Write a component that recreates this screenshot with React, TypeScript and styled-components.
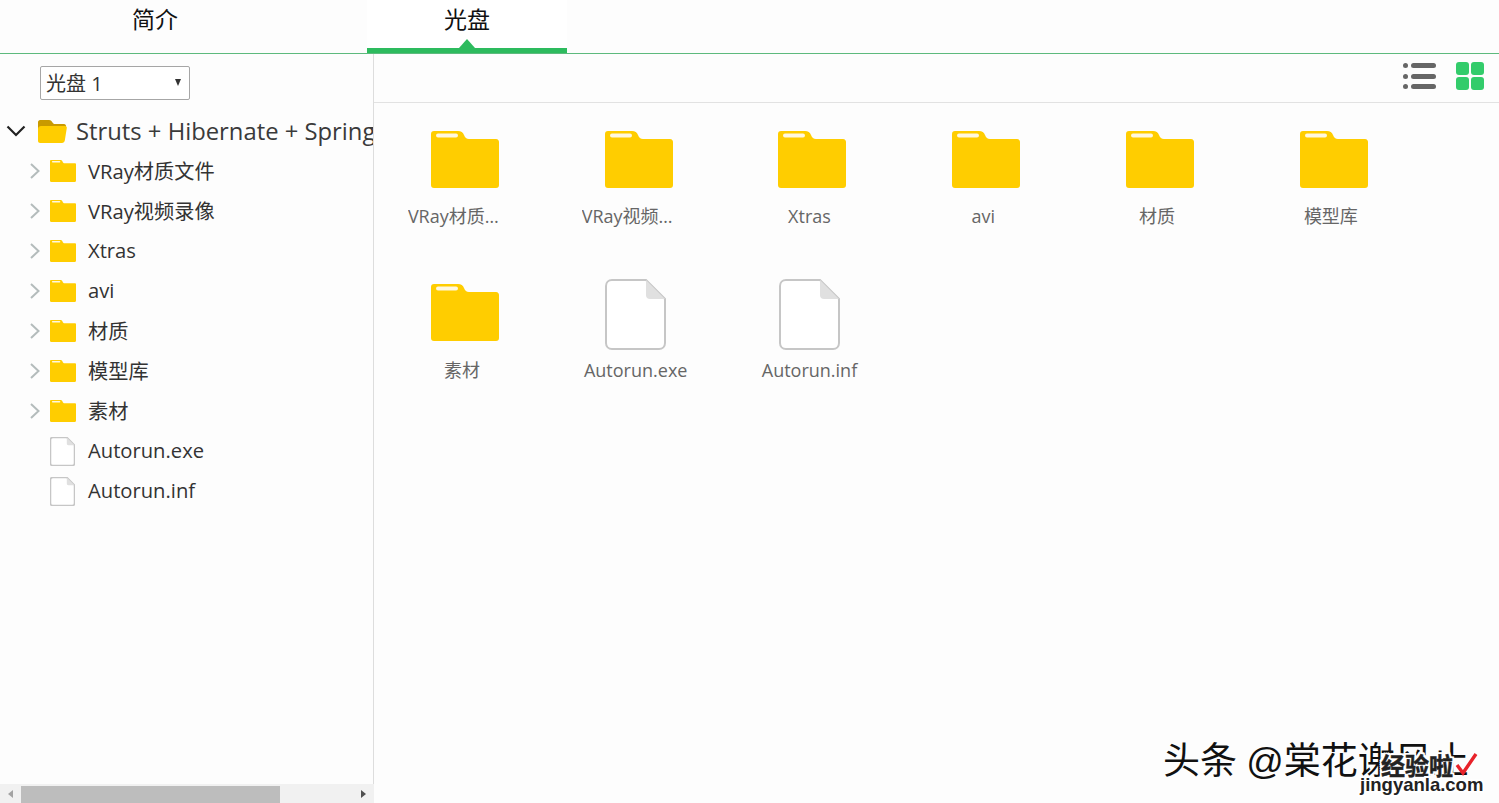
import React from "react";
import styled, { createGlobalStyle } from "styled-components";

const fontStack = `"Open Sans", "Noto Sans CJK SC", sans-serif`;

const Global = createGlobalStyle`
  html, body { margin: 0; padding: 0; height: 100%; background: #fdfdfd; overflow: hidden; }
  #root { height: 100%; }
  * { box-sizing: border-box; }
`;

const Page = styled.div`
  position: relative;
  width: 1499px;
  height: 803px;
  overflow: hidden;
  display: flex;
  flex-direction: column;
  font-family: ${fontStack};
  color: #333;
  background: #fdfdfd;
`;

const TabBar = styled.div`
  flex: none;
  height: 54px;
  display: flex;
  gap: 112px;
  padding-left: 55px;
  border-bottom: 1px solid #5dba7d;
`;

const Tab = styled.div<{ $active?: boolean }>`
  position: relative;
  width: 200px;
  height: 53px;
  padding-top: 2px;
  text-align: center;
  font-size: 23px;
  line-height: 35px;
  color: #111;
  background: ${(p) => (p.$active ? "#fff" : "transparent")};
  border-bottom: ${(p) => (p.$active ? "5px solid #2dbb5e" : "none")};
  ${(p) =>
    p.$active
      ? `&::after {
    content: "";
    position: absolute;
    left: 92px;
    bottom: 0;
    border-left: 8px solid transparent;
    border-right: 8px solid transparent;
    border-bottom: 9px solid #2dbb5e;
  }`
      : ""}
`;

const Body = styled.div`
  flex: 1;
  min-height: 0;
  display: flex;
`;

const Sidebar = styled.aside`
  flex: none;
  width: 374px;
  display: flex;
  flex-direction: column;
  border-right: 1px solid #ddd;
`;

const SelectRow = styled.div`
  flex: none;
  height: 57px;
  padding: 12px 0 0 40px;
`;

const SelectBox = styled.div`
  position: relative;
  width: 150px;
  height: 34px;
  &::after {
    content: "";
    position: absolute;
    right: 9px;
    top: 13px;
    border-left: 3.5px solid transparent;
    border-right: 3.5px solid transparent;
    border-top: 7px solid #333;
    pointer-events: none;
  }
`;

const DiscSelect = styled.select`
  width: 100%;
  height: 100%;
  appearance: none;
  padding: 0 0 0 5px;
  font-family: ${fontStack};
  font-size: 20px;
  color: #333;
  background: #fff;
  border: 1px solid #a6a6a6;
  border-radius: 2px;
`;

const Tree = styled.div`
  flex: 1;
  min-height: 0;
  overflow: hidden;
`;

const RootRow = styled.div`
  height: 40px;
  display: flex;
  align-items: center;
  padding-left: 6px;
  font-size: 23.8px;
  white-space: nowrap;
  color: #3a3a3a;
`;

const TreeRow = styled.div`
  height: 40px;
  display: flex;
  align-items: center;
  padding-left: 29px;
  font-size: 20.2px;
  white-space: nowrap;
  color: #333;
`;

const RowText = styled.span`
  display: block;
  margin-top: -2px;
`;

const RootText = styled.span`
  display: block;
`;

const Arrow = styled.span`
  flex: none;
  width: 21px;
  height: 20px;
  display: flex;
  align-items: center;
`;

const RootArrow = styled.span`
  flex: none;
  width: 32px;
  height: 20px;
  display: flex;
  align-items: center;
`;

const TreeIcon = styled.span`
  flex: none;
  width: 38px;
  display: flex;
  align-items: center;
`;

const RootIcon = styled.span`
  flex: none;
  width: 38px;
  display: flex;
  align-items: center;
`;

const ScrollTrack = styled.div`
  flex: none;
  height: 19px;
  display: flex;
  align-items: stretch;
  background: #f1f1f1;
  margin-right: -1px;
`;

const ScrollButton = styled.span`
  flex: none;
  width: 21px;
  display: flex;
  align-items: center;
  justify-content: center;
`;

const ScrollThumb = styled.span`
  flex: none;
  width: 259px;
  margin-top: 2px;
  background: #bdbdbd;
`;

const ScrollRest = styled.span`
  flex: 1;
`;

const LeftTri = styled.span`
  border-top: 4px solid transparent;
  border-bottom: 4px solid transparent;
  border-right: 5px solid #a3a3a3;
`;

const RightTri = styled.span`
  border-top: 4px solid transparent;
  border-bottom: 4px solid transparent;
  border-left: 5px solid #505050;
`;

const Main = styled.main`
  flex: 1;
  min-width: 0;
  display: flex;
  flex-direction: column;
`;

const Toolbar = styled.div`
  flex: none;
  height: 49px;
  display: flex;
  justify-content: flex-end;
  align-items: flex-start;
  gap: 20px;
  padding: 8px 15px 0 0;
  border-bottom: 1px solid #e2e2e2;
`;

const ListIcon = styled.div`
  width: 33px;
  height: 28px;
  display: flex;
  flex-direction: column;
  justify-content: space-between;
  padding: 1px 0;
`;

const ListLine = styled.div`
  height: 5px;
  display: flex;
  gap: 3px;
  &::before {
    content: "";
    width: 5px;
    border-radius: 50%;
    background: #666;
  }
  &::after {
    content: "";
    flex: 1;
    border-radius: 3px;
    background: #666;
  }
`;

const GridIcon = styled.div`
  width: 28px;
  height: 28px;
  display: grid;
  grid-template-columns: 13px 13px;
  grid-template-rows: 13px 13px;
  gap: 2px;
`;

const GridCell = styled.span`
  border-radius: 3px;
  background: #33cc6b;
`;

const FileGrid = styled.div`
  display: grid;
  grid-template-columns: repeat(6, 173.8px);
  grid-auto-rows: 153.5px;
  padding: 20.6px 0 0 1px;
`;

const Item = styled.div`
  display: flex;
  flex-direction: column;
  align-items: center;
`;

const ItemIcon = styled.div<{ $file?: boolean }>`
  height: 74px;
  margin-left: ${(p) => (p.$file ? "0" : "6px")};
  padding-top: ${(p) => (p.$file ? "2px" : "7px")};
`;

const ItemLabel = styled.div`
  width: 108px;
  margin-top: 5.9px;
  font-size: 18px;
  line-height: 26px;
  color: #666;
  text-align: center;
  white-space: nowrap;
  overflow: hidden;
  text-overflow: ellipsis;
`;

const Watermark = styled.div`
  position: absolute;
  left: 1163px;
  top: 735px;
  font-family: "Noto Sans CJK SC", sans-serif;
  font-size: 37px;
  line-height: 46px;
  word-spacing: 1px;
  color: #111;
  white-space: nowrap;
`;

const WatermarkAt = styled.span`
  font-family: "Liberation Sans", sans-serif;
`;

const StampCn = styled.div`
  position: absolute;
  left: 1381px;
  top: 750px;
  font-family: "Noto Sans CJK SC", sans-serif;
  font-weight: 700;
  font-size: 24px;
  line-height: 30px;
  color: #222;
  -webkit-text-stroke: 0.5px #222;
  text-shadow: 2px 0 #fff, -2px 0 #fff, 0 2px #fff, 0 -2px #fff, 2px 2px #fff, -2px -2px #fff, 2px -2px #fff, -2px 2px #fff;
  white-space: nowrap;
`;

const StampEn = styled.div`
  position: absolute;
  left: 1360px;
  top: 773px;
  font-family: "Liberation Sans", sans-serif;
  font-weight: 700;
  font-size: 18.5px;
  line-height: 24px;
  color: #222;
  text-shadow: 2px 0 #fff, -2px 0 #fff, 0 2px #fff, 0 -2px #fff, 2px 2px #fff, -2px -2px #fff, 2px -2px #fff, -2px 2px #fff;
  white-space: nowrap;
`;

const StampCheck = styled.svg`
  position: absolute;
  left: 1455px;
  top: 752px;
`;

const FolderGlyph = ({ w, h }: { w: number; h: number }) => (
  <svg width={w} height={h} viewBox="0 0 68 57" style={{ display: "block" }}>
    <path
      d="M3 0H27C30 0 32 1.5 33 4C34 6.5 35.5 8 38 8H65C67 8 68 9.5 68 11V54C68 56 67 57 65 57H3C1 57 0 56 0 54V3C0 1 1 0 3 0Z"
      fill="#ffcd00"
    />
    <rect x="5" y="2.5" width="22" height="4" rx="2" fill="#fff8e0" />
  </svg>
);

const OpenFolderGlyph = () => (
  <svg width="29" height="23" viewBox="0 0 29 23" style={{ display: "block" }}>
    <path d="M2 0H11C13 0 13.5 1 14.5 2.5C15 3.3 15.5 4 17 4H26C27.5 4 28 5 28 6V12H0V2C0 1 1 0 2 0Z" fill="#c99a00" />
    <path d="M3 6H27C28.5 6 29 7 28.8 8L26.8 20.5C26.5 22 25.5 23 24 23H2C1 23 0 22 0 21V9C0 7 1.5 6 3 6Z" fill="#ffcd00" />
  </svg>
);

const FileGlyph = ({ w, h, sw }: { w: number; h: number; sw: number }) => (
  <svg width={w} height={h} viewBox="0 0 61 71" style={{ display: "block" }}>
    <path
      d="M7 1H41L60 20V64C60 67.5 57.5 70 54 70H7C3.5 70 1 67.5 1 64V7C1 3.5 3.5 1 7 1Z"
      fill="#fff"
      stroke="#c6c6c6"
      strokeWidth={sw}
    />
    <path d="M41 1L60 20H45C42.5 20 41 18.5 41 16V1Z" fill="#e0e0e0" />
  </svg>
);

const ChevronRight = () => (
  <svg width="12" height="18" viewBox="0 0 12 18" style={{ display: "block" }}>
    <path d="M2 2L9.5 9L2 16" fill="none" stroke="#b4bcbc" strokeWidth="2" />
  </svg>
);

const ChevronDown = () => (
  <svg width="20" height="12" viewBox="0 0 20 12" style={{ display: "block" }}>
    <path d="M1.5 1.5L10 10L18.5 1.5" fill="none" stroke="#222" strokeWidth="2.2" />
  </svg>
);

type Entry = { name: string; kind: "folder" | "file" };

const entries: Entry[] = [
  { name: "VRay材质文件", kind: "folder" },
  { name: "VRay视频录像", kind: "folder" },
  { name: "Xtras", kind: "folder" },
  { name: "avi", kind: "folder" },
  { name: "材质", kind: "folder" },
  { name: "模型库", kind: "folder" },
  { name: "素材", kind: "folder" },
  { name: "Autorun.exe", kind: "file" },
  { name: "Autorun.inf", kind: "file" },
];

export default function App() {
  return (
    <Page>
      <Global />
      <TabBar>
        <Tab>简介</Tab>
        <Tab $active>光盘</Tab>
      </TabBar>
      <Body>
        <Sidebar>
          <SelectRow>
            <SelectBox>
              <DiscSelect defaultValue="1">
                <option value="1">光盘 1</option>
              </DiscSelect>
            </SelectBox>
          </SelectRow>
          <Tree>
            <RootRow>
              <RootArrow>
                <ChevronDown />
              </RootArrow>
              <RootIcon>
                <OpenFolderGlyph />
              </RootIcon>
              <RootText>Struts + Hibernate + Spring</RootText>
            </RootRow>
            {entries.map((e) => (
              <TreeRow key={e.name}>
                <Arrow>{e.kind === "folder" ? <ChevronRight /> : null}</Arrow>
                <TreeIcon>
                  {e.kind === "folder" ? <FolderGlyph w={26} h={22} /> : <FileGlyph w={25} h={29} sw={4} />}
                </TreeIcon>
                <RowText>{e.name}</RowText>
              </TreeRow>
            ))}
          </Tree>
          <ScrollTrack>
            <ScrollButton>
              <LeftTri />
            </ScrollButton>
            <ScrollThumb />
            <ScrollRest />
            <ScrollButton>
              <RightTri />
            </ScrollButton>
          </ScrollTrack>
        </Sidebar>
        <Main>
          <Toolbar>
            <ListIcon>
              <ListLine />
              <ListLine />
              <ListLine />
            </ListIcon>
            <GridIcon>
              <GridCell />
              <GridCell />
              <GridCell />
              <GridCell />
            </GridIcon>
          </Toolbar>
          <FileGrid>
            {entries.map((e) => (
              <Item key={e.name}>
                <ItemIcon $file={e.kind === "file"}>
                  {e.kind === "folder" ? <FolderGlyph w={68} h={57} /> : <FileGlyph w={61} h={71} sw={2} />}
                </ItemIcon>
                <ItemLabel>{e.name}</ItemLabel>
              </Item>
            ))}
          </FileGrid>
        </Main>
      </Body>
      <Watermark>
        头条 <WatermarkAt>@</WatermarkAt>棠花谢风止
      </Watermark>
      <StampCn>经验啦</StampCn>
      <StampEn>jingyanla.com</StampEn>
      <StampCheck width="24" height="24" viewBox="0 0 24 24">
        <path d="M2 13L8 21L21 2" fill="none" stroke="#e8222a" strokeWidth="3.4" />
      </StampCheck>
    </Page>
  );
}
